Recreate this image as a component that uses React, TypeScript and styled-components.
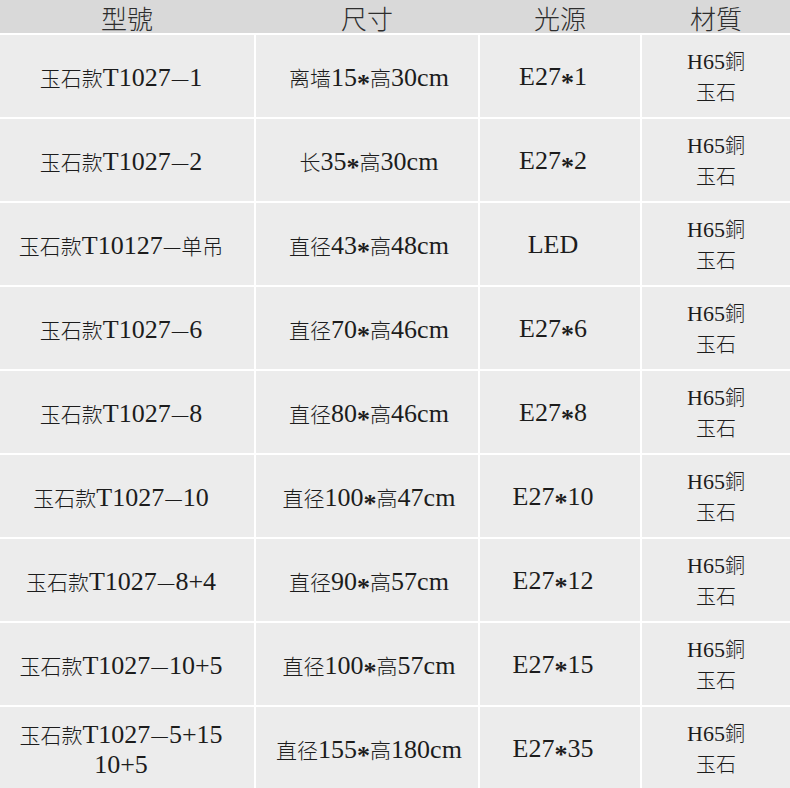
import React from 'react';
import styled, { createGlobalStyle } from 'styled-components';

const GlobalStyle = createGlobalStyle`
    html, body {
        margin: 0;
        padding: 0;
        background: #ffffff;
    }
`;

const rows = [
    { model: '玉石款T1027—1', size: '离墙15*高30cm', light: 'E27*1' },
    { model: '玉石款T1027—2', size: '长35*高30cm', light: 'E27*2' },
    { model: '玉石款T10127—单吊', size: '直径43*高48cm', light: 'LED' },
    { model: '玉石款T1027—6', size: '直径70*高46cm', light: 'E27*6' },
    { model: '玉石款T1027—8', size: '直径80*高46cm', light: 'E27*8' },
    { model: '玉石款T1027—10', size: '直径100*高47cm', light: 'E27*10' },
    { model: '玉石款T1027—8+4', size: '直径90*高57cm', light: 'E27*12' },
    { model: '玉石款T1027—10+5', size: '直径100*高57cm', light: 'E27*15' },
    { model: '玉石款T1027—5+15\n10+5', size: '直径155*高180cm', light: 'E27*35' },
];

const COLUMNS = '254px 222px 160px 1fr';

const Han = styled.span`
    font-family: "Noto Sans CJK SC", sans-serif;
    font-weight: 300;
`;

const Star = styled.span`
    font-weight: 700;
    vertical-align: -0.22em;
    line-height: 0;
`;

const Line = styled.div`
    text-align: center;
`;

// CJK glyphs are set smaller than the latin ones, as in the original artwork,
// and the asterisk sits lower, near the middle of the digits
const mixed = (text: string) =>
    text.split(/([\u4e00-\u9fff\u2014]+|\*)/).map((part, i) => {
        if (part === '*') return <Star key={i}>*</Star>;
        if (/[\u4e00-\u9fff\u2014]/.test(part)) return <Han key={i}>{part}</Han>;
        return part;
    });

const lines = (text: string) =>
    text.split('\n').map((line, i) => <Line key={i}>{mixed(line)}</Line>);

const Table = styled.div`
    width: 790px;
    display: grid;
    grid-template-columns: ${COLUMNS};
    grid-template-rows: 33px repeat(9, 82px);
    gap: 2px;
    background: #ffffff;
    font-family: "Liberation Serif", "Times New Roman", "DejaVu Serif", serif;
    color: #1c1c1c;
`;

const HeaderRow = styled.div`
    grid-column: 1 / -1;
    display: grid;
    grid-template-columns: ${COLUMNS};
    column-gap: 2px;
    background: #d9d9d9;
`;

const HeadCell = styled.div`
    display: flex;
    align-items: center;
    justify-content: center;
    padding-top: 3px;
    font-family: "Noto Sans CJK SC", sans-serif;
    font-size: 26px;
    font-weight: 300;
    color: #2e2e2e;
    line-height: 30px;
`;

const Cell = styled.div<{ small?: boolean; shift?: number }>`
    background: #ececec;
    display: flex;
    flex-direction: column;
    align-items: center;
    justify-content: center;
    padding-top: 2px;
    padding-right: ${p => (p.shift && p.shift < 0 ? -p.shift * 2 : 0)}px;
    padding-left: ${p => (p.shift && p.shift > 0 ? p.shift * 2 : 0)}px;
    box-sizing: border-box;
    font-size: ${p => (p.small ? '22px' : '26px')};
    line-height: 30px;
    white-space: nowrap;

    ${Han} {
        font-size: ${p => (p.small ? '20px' : '21px')};
    }
`;

const App: React.FC = () => {
    return (
        <>
            <GlobalStyle />
            <Table>
                <HeaderRow>
                    <HeadCell>型號</HeadCell>
                    <HeadCell>尺寸</HeadCell>
                    <HeadCell>光源</HeadCell>
                    <HeadCell>材質</HeadCell>
                </HeaderRow>
                {rows.map((row, index) => (
                    <React.Fragment key={index}>
                        <Cell shift={-6}>{lines(row.model)}</Cell>
                        <Cell shift={2}>{lines(row.size)}</Cell>
                        <Cell shift={-7}>{lines(row.light)}</Cell>
                        <Cell small>
                            <Line>{mixed('H65銅')}</Line>
                            <Line>{mixed('玉石')}</Line>
                        </Cell>
                    </React.Fragment>
                ))}
            </Table>
        </>
    );
};

export default App;
